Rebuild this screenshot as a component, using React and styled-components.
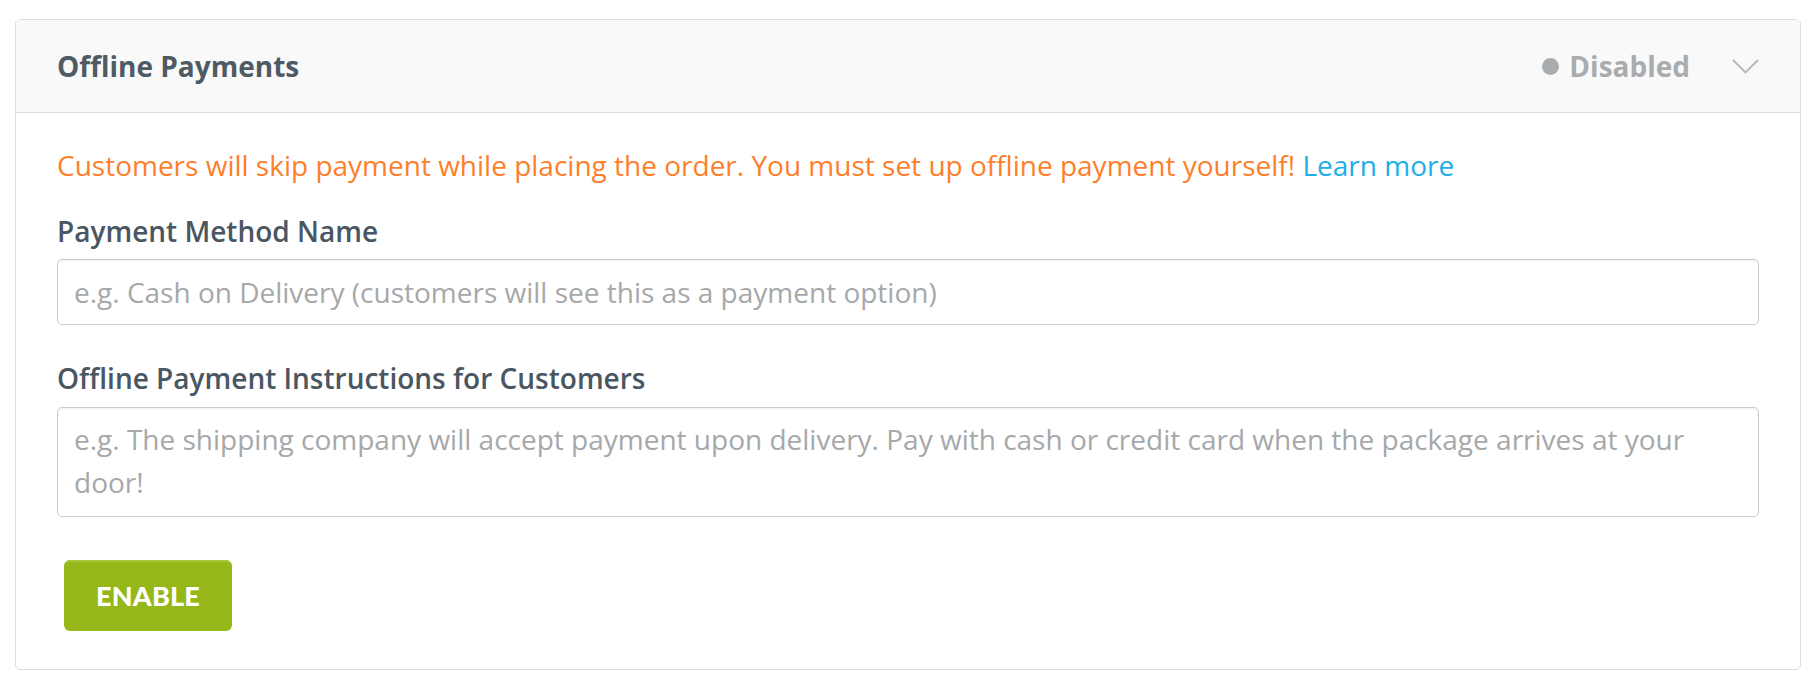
import React from 'react'
import styled, { createGlobalStyle } from 'styled-components'

const GlobalStyle = createGlobalStyle`
  html, body {
    margin: 0;
    padding: 0;
    background: #fff;
  }
  body {
    font-family: "Open Sans", "Liberation Sans", sans-serif;
  }
`

const Page = styled.div`
  padding: 19px 15px 20px 15px;
`

const Card = styled.section`
  border: 1px solid #dcdcdc;
  border-radius: 5px;
  background: #fff;
  overflow: hidden;
`

const Header = styled.header`
  display: flex;
  align-items: center;
  justify-content: space-between;
  height: 92px;
  padding: 0 41px 0 41px;
  background: #f9f9f9;
  border-bottom: 1px solid #dcdcdc;
`

const Title = styled.h2`
  margin: 0;
  font-size: 28px;
  line-height: 38px;
  font-weight: 700;
  color: #4e5b64;
`

const Status = styled.div`
  display: flex;
  align-items: center;
`

const Dot = styled.span`
  width: 17px;
  height: 17px;
  border-radius: 50%;
  background: #a9acaf;
  margin-right: 10px;
`

const StatusText = styled.span`
  font-size: 28px;
  line-height: 38px;
  font-weight: 700;
  color: #a9acaf;
`

const Chevron = styled.svg`
  width: 27px;
  height: 15px;
  margin-left: 42px;
  display: block;
`

const Body = styled.div`
  padding: 33px 41px 38px 41px;
`

const Notice = styled.p`
  margin: 0;
  font-size: 28px;
  line-height: 38px;
  color: #fd7f2c;
`

const Link = styled.a`
  color: #20aee5;
  text-decoration: none;
`

const Label = styled.label`
  display: block;
  margin: ${p => p.$top}px 0 ${p => p.$bottom}px 0;
  font-size: 28px;
  line-height: 38px;
  font-weight: 600;
  color: #4a5661;
`

const fieldBase = `
  display: block;
  width: 100%;
  box-sizing: border-box;
  border: 1px solid #c9ccd0;
  border-radius: 5px;
  background: #fff;
  box-shadow: inset 0 1px 2px rgba(0, 0, 0, 0.06);
  font-family: "Open Sans", "Liberation Sans", sans-serif;
  font-size: 28px;
  color: #4a5661;
  outline: none;
  &::placeholder {
    color: #a6a8aa;
    opacity: 1;
  }
`

const Input = styled.input`
  ${fieldBase}
  height: 66px;
  padding: 0 16px;
`

const TextArea = styled.textarea`
  ${fieldBase}
  height: 110px;
  padding: 10px 16px;
  line-height: 43px;
  resize: none;
  overflow: hidden;
`

const Button = styled.button`
  display: block;
  margin-top: 43px;
  margin-left: 7px;
  width: 168px;
  height: 71px;
  border: none;
  border-radius: 6px;
  background: #95b71a;
  box-shadow: inset 0 3px 0 -1px #a9c83e;
  color: #fff;
  font-family: Lato, "Liberation Sans", sans-serif;
  font-weight: 900;
  font-size: 27px;
  letter-spacing: 0.2px;
  cursor: pointer;
`

export default function App() {
  return (
    <>
      <GlobalStyle />
      <Page>
        <Card>
          <Header>
            <Title>Offline Payments</Title>
            <Status>
              <Dot />
              <StatusText>Disabled</StatusText>
              <Chevron viewBox="0 0 27 15">
                <polyline points="1,1 13.5,13.5 26,1" fill="none" stroke="#b4b7ba" strokeWidth="1.8" />
              </Chevron>
            </Status>
          </Header>
          <Body>
            <Notice>
              Customers will skip payment while placing the order. You must set up offline payment yourself!{' '}
              <Link href="#">Learn more</Link>
            </Notice>
            <Label $top={28} $bottom={9}>Payment Method Name</Label>
            <Input placeholder="e.g. Cash on Delivery (customers will see this as a payment option)" />
            <Label $top={34} $bottom={10}>Offline Payment Instructions for Customers</Label>
            <TextArea placeholder="e.g. The shipping company will accept payment upon delivery. Pay with cash or credit card when the package arrives at your door!" />
            <Button>ENABLE</Button>
          </Body>
        </Card>
      </Page>
    </>
  )
}
